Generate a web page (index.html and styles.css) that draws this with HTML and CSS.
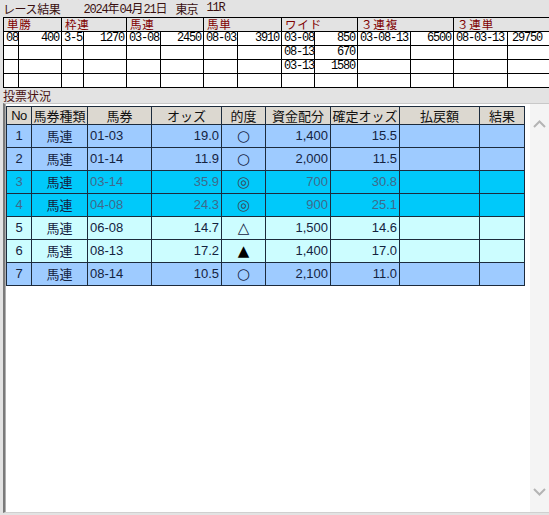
FILE: index.html
```html
<!DOCTYPE html>
<html lang="ja">
<head>
<meta charset="utf-8">
<title>レース結果</title>
<link rel="stylesheet" href="styles.css">
</head>
<body>
<div class="page">
  <div class="title">
    <span class="jp first">レース結果</span>
    <span class="date">2024<span class="jp">年</span>04<span class="jp">月</span>21<span class="jp">日</span></span>
    <span class="jp place">東京</span>
    <span class="race">11R</span>
  </div>
  <div class="top-wrap">
    <table class="result">
      <colgroup>
        <col class="c15"><col class="c43"><col class="c22"><col class="c43"><col class="c34"><col class="c43"><col class="c34"><col class="c44"><col class="c33"><col class="c43"><col class="c53"><col class="c43"><col class="c54"><col class="c46">
      </colgroup>
      <tr class="head">
        <th colspan="2" class="jp">単勝</th>
        <th colspan="2" class="jp">枠連</th>
        <th colspan="2" class="jp">馬連</th>
        <th colspan="2" class="jp">馬単</th>
        <th colspan="2" class="jp">ワイド</th>
        <th colspan="2" class="jp">３連複</th>
        <th colspan="2" class="jp">３連単</th>
      </tr>
      <tr>
        <td>08</td><td class="r">400</td>
        <td>3-5</td><td class="r">1270</td>
        <td>03-08</td><td class="r">2450</td>
        <td>08-03</td><td class="r">3910</td>
        <td>03-08</td><td class="r">850</td>
        <td>03-08-13</td><td class="r">6500</td>
        <td>08-03-13</td><td class="r last">29750</td>
      </tr>
      <tr>
        <td></td><td></td><td></td><td></td><td></td><td></td><td></td><td></td>
        <td>08-13</td><td class="r">670</td>
        <td></td><td></td><td></td><td></td>
      </tr>
      <tr>
        <td></td><td></td><td></td><td></td><td></td><td></td><td></td><td></td>
        <td>03-13</td><td class="r">1580</td>
        <td></td><td></td><td></td><td></td>
      </tr>
      <tr>
        <td></td><td></td><td></td><td></td><td></td><td></td><td></td><td></td>
        <td></td><td></td><td></td><td></td><td></td><td></td>
      </tr>
    </table>
  </div>
  <div class="section jp">投票状況</div>
  <div class="panel">
    <div class="grid-area">
      <table class="grid">
        <colgroup>
          <col class="g25"><col class="g56"><col class="g64"><col class="g70"><col class="g44"><col class="g65"><col class="g69"><col class="g80"><col class="g45">
        </colgroup>
        <tr class="ghead">
          <th class="lat">No</th><th>馬券種類</th><th>馬券</th><th>オッズ</th><th>的度</th><th>資金配分</th><th>確定オッズ</th><th>払戻額</th><th>結果</th>
        </tr>
        <tr class="blue">
          <td class="c">1</td><td class="c jpc">馬連</td><td class="l">01-03</td><td class="r">19.0</td><td class="c sym">○</td><td class="r">1,400</td><td class="r">15.5</td><td></td><td></td>
        </tr>
        <tr class="blue">
          <td class="c">2</td><td class="c jpc">馬連</td><td class="l">01-14</td><td class="r">11.9</td><td class="c sym">○</td><td class="r">2,000</td><td class="r">11.5</td><td></td><td></td>
        </tr>
        <tr class="cyan">
          <td class="c fade">3</td><td class="c jpc">馬連</td><td class="l fade">03-14</td><td class="r fade">35.9</td><td class="c sym dim">◎</td><td class="r fade">700</td><td class="r fade">30.8</td><td></td><td></td>
        </tr>
        <tr class="cyan">
          <td class="c fade">4</td><td class="c jpc">馬連</td><td class="l fade">04-08</td><td class="r fade">24.3</td><td class="c sym dim">◎</td><td class="r fade">900</td><td class="r fade">25.1</td><td></td><td></td>
        </tr>
        <tr class="pale">
          <td class="c">5</td><td class="c jpc">馬連</td><td class="l">06-08</td><td class="r">14.7</td><td class="c sym">△</td><td class="r">1,500</td><td class="r">14.6</td><td></td><td></td>
        </tr>
        <tr class="pale">
          <td class="c">6</td><td class="c jpc">馬連</td><td class="l">08-13</td><td class="r">17.2</td><td class="c sym black">▲</td><td class="r">1,400</td><td class="r">17.0</td><td></td><td></td>
        </tr>
        <tr class="blue">
          <td class="c">7</td><td class="c jpc">馬連</td><td class="l">08-14</td><td class="r">10.5</td><td class="c sym">○</td><td class="r">2,100</td><td class="r">11.0</td><td></td><td></td>
        </tr>
      </table>
    </div>
    <div class="scrollbar">
      <svg class="chev up" width="13" height="8" viewBox="0 0 13 8"><path d="M1 7 L6.5 1.5 L12 7" fill="none" stroke="#b4b4b4" stroke-width="2"/></svg>
      <svg class="chev down" width="13" height="8" viewBox="0 0 13 8"><path d="M1 1 L6.5 6.5 L12 1" fill="none" stroke="#b4b4b4" stroke-width="2"/></svg>
    </div>
  </div>
</div>
</body>
</html>
```

FILE: styles.css
```css
html, body {
  margin: 0;
  padding: 0;
  background: #e3e3e3;
}
body {
  width: 549px;
  height: 515px;
  overflow: hidden;
  font-family: "Liberation Mono", "Noto Sans CJK JP", monospace;
  font-size: 12px;
  letter-spacing: -1.2px;
  color: #000;
}
.page {
  display: flex;
  flex-direction: column;
  height: 515px;
}
.jp {
  font-family: "Noto Sans CJK JP", sans-serif;
  font-size: 12px;
  letter-spacing: 0;
}
.title {
  height: 17px;
  line-height: 15px;
  padding-left: 3px;
  color: #3a1010;
  white-space: nowrap;
  display: flex;
  align-items: center;
}
.title .first {
  letter-spacing: -0.4px;
}
.title .date {
  margin-left: 23px;
}
.title .place {
  margin-left: 8px;
  letter-spacing: -1px;
}
.title .race {
  margin-left: 9px;
}
.top-wrap {
  width: 549px;
  overflow: hidden;
  padding-left: 3px;
  box-sizing: border-box;
}
.result {
  border-collapse: collapse;
  table-layout: fixed;
  width: 550px;
}
.result col.c15 { width: 15px; }
.result col.c22 { width: 22px; }
.result col.c33 { width: 33px; }
.result col.c34 { width: 34px; }
.result col.c43 { width: 43px; }
.result col.c44 { width: 44px; }
.result col.c46 { width: 46px; }
.result col.c53 { width: 53px; }
.result col.c54 { width: 54px; }
.result th,
.result td {
  border: 1px solid #000;
  height: 13px;
  line-height: 13px;
  padding: 0 1px 0 2px;
  overflow: hidden;
  white-space: nowrap;
  text-align: left;
  vertical-align: middle;
  background: #fff;
}
.result .head th {
  background: #e3e3e3;
  color: #800000;
  font-weight: normal;
  font-size: 11.5px;
  letter-spacing: 0.8px;
  padding-left: 3px;
}
.result td.r {
  text-align: right;
  padding-right: 2px;
}
.result td.last {
  padding-right: 11px;
}
.section {
  height: 15px;
  line-height: 15px;
  padding-left: 3px;
  color: #4a1010;
  letter-spacing: 0;
}
.panel {
  flex: 1;
  margin: 0 0 2px 3px;
  display: flex;
  background: #fff;
  border-top: 1px solid #c8c8c8;
  border-left: 2px solid #7a7a7a;
  box-shadow: inset 1px 0 0 #b0b0b0;
  border-bottom: 1px solid #d0d0d0;
}
.grid-area {
  flex: 1;
  padding: 2px 0 0 1px;
}
.scrollbar {
  width: 19px;
  background: #f4f4f4;
  display: flex;
  flex-direction: column;
  justify-content: space-between;
  align-items: center;
  padding: 16px 0 16px;
}
.grid {
  border-collapse: collapse;
  table-layout: fixed;
  width: 518px;
  font-family: "Liberation Sans", "Noto Sans CJK JP", sans-serif;
  font-size: 13px;
  letter-spacing: 0;
  color: #14233f;
}
.grid col.g25 { width: 25px; }
.grid col.g44 { width: 44px; }
.grid col.g45 { width: 45px; }
.grid col.g56 { width: 56px; }
.grid col.g64 { width: 64px; }
.grid col.g65 { width: 65px; }
.grid col.g69 { width: 69px; }
.grid col.g70 { width: 70px; }
.grid col.g80 { width: 80px; }
.grid th,
.grid td {
  border: 1px solid #1c2b3c;
  padding: 0 3px;
  white-space: nowrap;
  overflow: hidden;
}
.grid .ghead th {
  height: 17px;
  line-height: 16px;
  background: #dcd8d0;
  font-family: "Noto Sans CJK JP", sans-serif;
  font-weight: normal;
  font-size: 13px;
  color: #111;
  text-align: center;
  padding: 0;
}
.grid .ghead th.lat {
  font-family: "Liberation Sans", sans-serif;
  letter-spacing: -0.5px;
}
.grid td {
  height: 22px;
  line-height: 20px;
}
.grid td.c { text-align: center; padding: 0; }
.grid td.l { text-align: left; padding-left: 2px; }
.grid td.r { text-align: right; padding-right: 2px; }
.grid td.jpc {
  font-family: "Noto Sans CJK JP", sans-serif;
  font-size: 13px;
}
.grid td.sym {
  font-family: "DejaVu Sans", sans-serif;
  font-size: 15px;
}
.grid td.black { color: #000; }
.grid td.fade { color: #3f6a8c; }
.grid td.dim { color: #3a4a5a; }
.grid tr.blue td { background: #9ecbff; }
.grid tr.cyan td { background: #00c9fa; }
.grid tr.pale td { background: #ccfdff; }
```
